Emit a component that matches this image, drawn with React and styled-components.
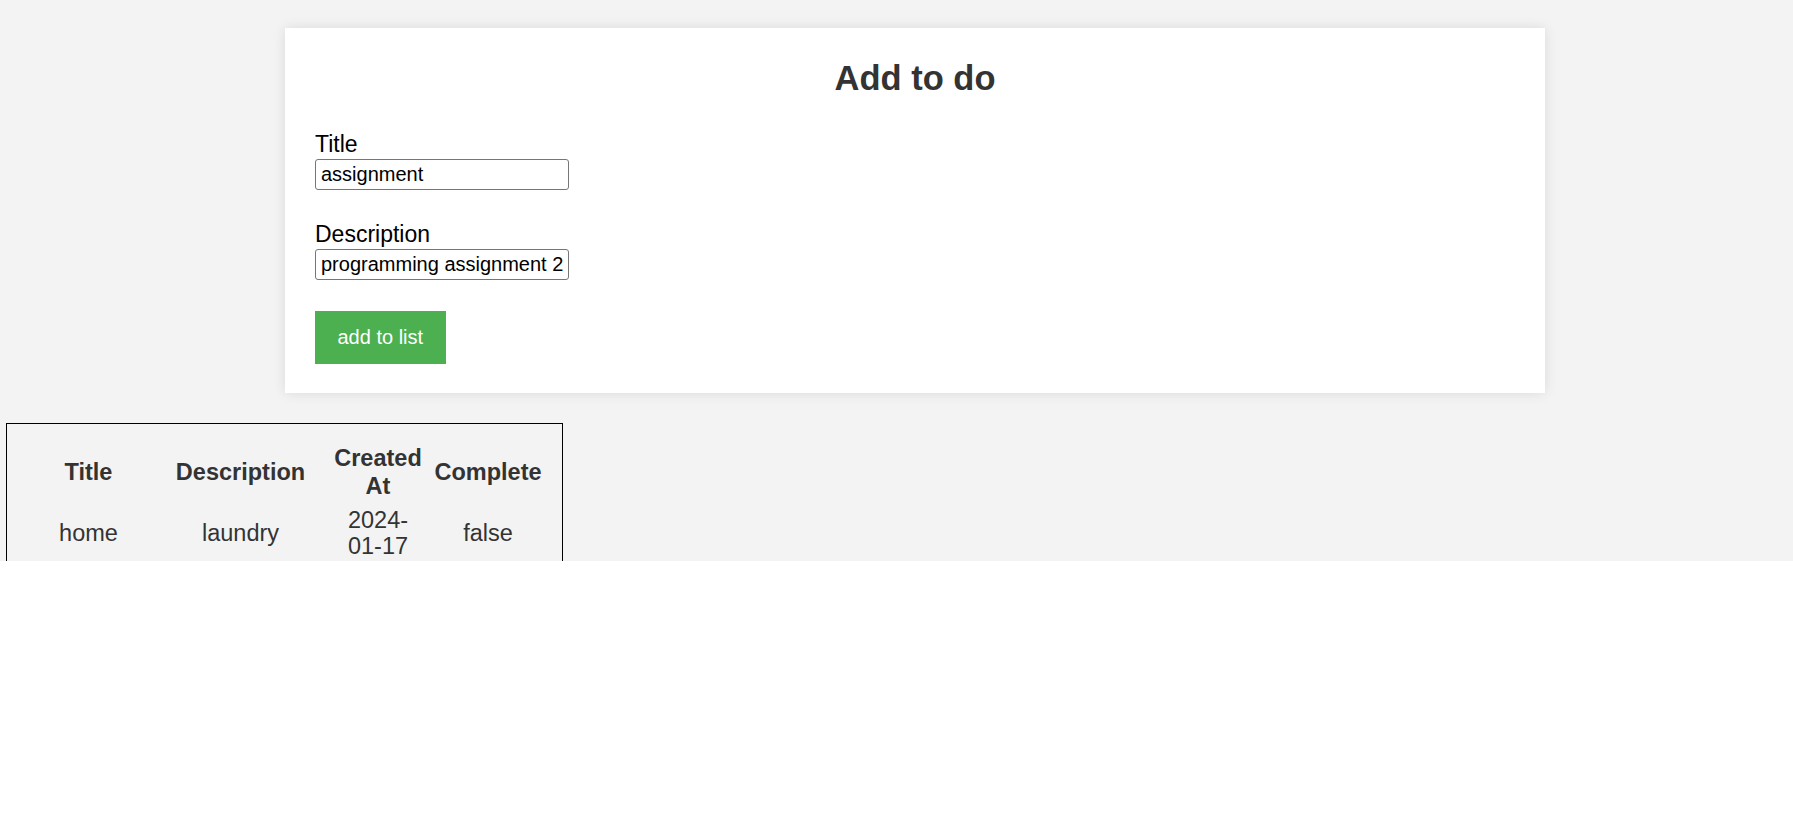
import React from 'react';
import styled, { createGlobalStyle } from 'styled-components';

const GlobalStyle = createGlobalStyle`
    body {
        margin: 0;
        background: #fff;
        font-family: "Liberation Sans", Arial, sans-serif;
    }
`;

const todos = [
    { title: 'home', description: 'laundry', createdAt: '2024-01-17', complete: false },
];

const App = () => {
    return (
        <Page>
            <GlobalStyle />
            <Card>
                <Heading>Add to do</Heading>
                <Field>
                    <Label htmlFor="title">Title</Label>
                    <Input id="title" defaultValue="assignment" />
                </Field>
                <Field>
                    <Label htmlFor="description">Description</Label>
                    <Input id="description" defaultValue="programming assignment 2" />
                </Field>
                <AddButton type="button">add to list</AddButton>
            </Card>
            <TodoTable>
                <colgroup>
                    <Col $w={163} />
                    <Col $w={141} />
                    <Col $w={119} />
                    <Col $w={132} />
                </colgroup>
                <thead>
                    <tr>
                        <th>Title</th>
                        <th>Description</th>
                        <th>Created At</th>
                        <th>Complete</th>
                    </tr>
                </thead>
                <tbody>
                    {todos.map((todo) => (
                        <tr key={todo.title}>
                            <td>{todo.title}</td>
                            <td>{todo.description}</td>
                            <td>{todo.createdAt}</td>
                            <td>{String(todo.complete)}</td>
                        </tr>
                    ))}
                </tbody>
            </TodoTable>
        </Page>
    )
}

export default App

//Grey page area
const Page = styled.div`
    background: #f3f3f3;
    height: 561px;
    overflow: hidden;
    padding-top: 28px;
    box-sizing: border-box;
`;

const Card = styled.div`
    width: 1260px;
    margin-left: 285px;
    box-sizing: border-box;
    padding: 31px 30px 29px;
    background: #fff;
    box-shadow: 0 0 12px rgba(0, 0, 0, 0.1);
`;

const Heading = styled.h1`
    margin: 0 0 33px;
    font-size: 34.5px;
    font-weight: bold;
    color: #333;
    text-align: center;
`;

const Field = styled.div`
    margin-bottom: 31px;
`;

const Label = styled.label`
    display: block;
    margin-bottom: 1px;
    font-size: 23px;
    color: #000;
`;

const Input = styled.input`
    display: block;
    width: 254px;
    height: 31px;
    box-sizing: border-box;
    padding: 3px 5px;
    border: 1px solid #767676;
    border-radius: 3px;
    font-family: "Liberation Sans", Arial, sans-serif;
    font-size: 20px;
    color: #000;
`;

const AddButton = styled.button`
    display: block;
    padding: 15px 22.5px;
    border: none;
    background: #4caf50;
    color: #fff;
    font-family: "Liberation Sans", Arial, sans-serif;
    font-size: 20px;
    line-height: 23px;
    cursor: pointer;
`;

const TodoTable = styled.table`
    margin: 30px 0 0 6px;
    width: 557px;
    box-sizing: border-box;
    table-layout: fixed;
    border: 1px solid #000;
    border-collapse: separate;
    border-spacing: 0;
    color: #333;
    text-align: center;

    th {
        padding: 20px 0 3.5px;
        font-size: 23.5px;
        font-weight: bold;
        line-height: 28px;
    }
    td {
        padding: 3px 0 4px;
        font-size: 23.5px;
        line-height: 26.5px;
    }
    th:nth-child(3), td:nth-child(3) {
        padding-left: 22px;
        padding-right: 7px;
    }
    th:nth-child(4), td:nth-child(4) {
        padding-right: 16px;
    }
`;

const Col = styled.col`
    width: ${(p) => p.$w}px;
`;
